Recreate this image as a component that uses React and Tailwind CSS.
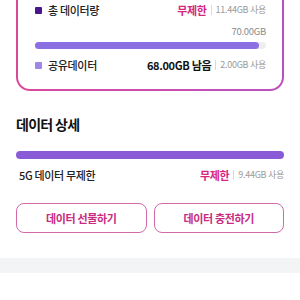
import React from 'react'

const font = { fontFamily: '"Noto Sans CJK KR", "Noto Sans", sans-serif' }

function Sep() {
  return <span className="mx-[4px] inline-block h-[10px] w-px bg-[#d9d9d9]" />
}

function UsageRow({ color, label, main, mainClass, used }) {
  return (
    <div className="flex h-[16px] items-center justify-between">
      <div className="flex items-center">
        <span className={`h-[7px] w-[7px] rounded-[1px] ${color}`} />
        <span className="ml-[6px] text-[11px] font-medium tracking-[-0.03em] text-[#222]">{label}</span>
      </div>
      <div className="flex items-center">
        <span className={`text-[11px] font-bold tracking-[-0.03em] ${mainClass}`}>{main}</span>
        <Sep />
        <span className="text-[9px] tracking-[-0.03em] text-[#9a9a9a]">{used}</span>
      </div>
    </div>
  )
}

export default function App() {
  return (
    <div className="h-[300px] w-[300px] overflow-hidden bg-white" style={font}>
      <div className="px-4">
        <div className="-mt-[14px] rounded-[14px] bg-gradient-to-r from-[#d9489b] to-[#bb4fc0] p-[2px]">
          <div className="rounded-[12px] bg-white pb-[16px] pl-[17px] pr-[16px] pt-[14px]">
            <UsageRow
              color="bg-[#4a168f]"
              label="총 데이터량"
              main="무제한"
              mainClass="text-[#d6267f]"
              used="11.44GB 사용"
            />
            <div className="mt-[7px] text-right text-[9.5px] leading-[12px] tracking-[-0.03em] text-[#8a8a8a]">
              70.00GB
            </div>
            <div className="mt-[5px] h-[7px] rounded-full bg-[#eeeeee]">
              <div className="h-full w-[97%] rounded-full bg-[#8c6fe2]" />
            </div>
            <div className="mt-[8px]">
              <UsageRow
                color="bg-[#9f87e8]"
                label="공유데이터"
                main="68.00GB 남음"
                mainClass="text-[#111]"
                used="2.00GB 사용"
              />
            </div>
          </div>
        </div>

        <h2 className="mt-[23px] text-[14px] font-bold leading-[20px] tracking-[-0.05em] text-[#111]">
          데이터 상세
        </h2>
        <div className="mt-[17px] h-[8px] rounded-full bg-[#8a5bd6]" />
        <div className="mt-[8px] flex h-[16px] items-center justify-between">
          <span className="pl-[3px] text-[11px] font-medium tracking-[-0.03em] text-[#222]">5G 데이터 무제한</span>
          <div className="flex items-center">
            <span className="text-[11px] font-bold tracking-[-0.03em] text-[#d6267f]">무제한</span>
            <Sep />
            <span className="text-[9px] tracking-[-0.03em] text-[#9a9a9a]">9.44GB 사용</span>
          </div>
        </div>

        <div className="mt-[20px] grid grid-cols-2 gap-[7px]">
          <button className="h-[30px] rounded-[8px] border-[1.5px] border-[#d26aa8] text-[11px] font-bold tracking-[-0.03em] text-[#c72c80]">
            데이터 선물하기
          </button>
          <button className="h-[30px] rounded-[8px] border-[1.5px] border-[#d26aa8] text-[11px] font-bold tracking-[-0.03em] text-[#c72c80]">
            데이터 충전하기
          </button>
        </div>
      </div>
      <div className="mt-[25px] h-[15px] bg-[#f3f4f6]" />
    </div>
  )
}
